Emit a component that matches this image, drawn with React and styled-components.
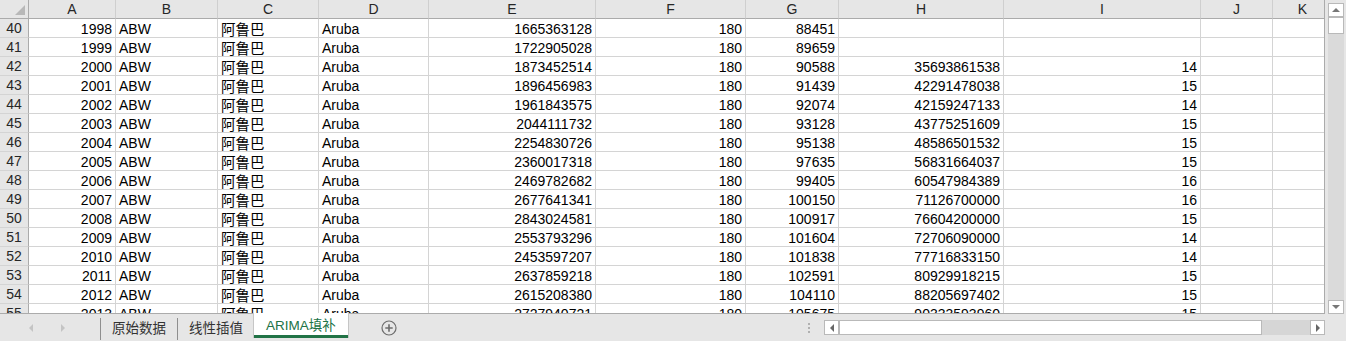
import React from "react";
import styled, { createGlobalStyle } from "styled-components";

const GlobalStyle = createGlobalStyle`
    body {
        margin: 0;
        overflow: hidden;
        background: #e6e6e6;
        font-family: "Liberation Sans", Arial, "Noto Sans CJK SC", sans-serif;
    }
`;

const COLS = [
    { key: "A", w: 87 },
    { key: "B", w: 102 },
    { key: "C", w: 101 },
    { key: "D", w: 110 },
    { key: "E", w: 167 },
    { key: "F", w: 150 },
    { key: "G", w: 93 },
    { key: "H", w: 165 },
    { key: "I", w: 197 },
    { key: "J", w: 72 },
    { key: "K", w: 60 },
];

const ROWS = [
    [40, 1998, 1665363128, 88451, "", ""],
    [41, 1999, 1722905028, 89659, "", ""],
    [42, 2000, 1873452514, 90588, "35693861538", 14],
    [43, 2001, 1896456983, 91439, "42291478038", 15],
    [44, 2002, 1961843575, 92074, "42159247133", 14],
    [45, 2003, 2044111732, 93128, "43775251609", 15],
    [46, 2004, 2254830726, 95138, "48586501532", 15],
    [47, 2005, 2360017318, 97635, "56831664037", 15],
    [48, 2006, 2469782682, 99405, "60547984389", 16],
    [49, 2007, 2677641341, 100150, "71126700000", 16],
    [50, 2008, 2843024581, 100917, "76604200000", 15],
    [51, 2009, 2553793296, 101604, "72706090000", 14],
    [52, 2010, 2453597207, 101838, "77716833150", 14],
    [53, 2011, 2637859218, 102591, "80929918215", 15],
    [54, 2012, 2615208380, 104110, "88205697402", 15],
    [55, 2013, 2727940721, 105675, "90333593960", 15],
];

const S = {
    Window: styled.div`
        width: 1346px;
        height: 341px;
        display: flex;
        flex-direction: column;
        background: #e6e6e6;
        overflow: hidden;
    `,
    Main: styled.div`
        display: flex;
        height: 314px;
    `,
    Sheet: styled.div`
        width: 1325px;
        height: 314px;
        box-sizing: border-box;
        border-right: 1px solid #ababab;
        border-bottom: 1px solid #ababab;
        background: #fff;
        overflow: hidden;
    `,
    Grid: styled.div`
        display: grid;
        grid-template-columns: 29px ${COLS.map(c => c.w + "px").join(" ")};
        grid-auto-rows: 19px;
    `,
    Corner: styled.div`
        position: relative;
        background: #e6e6e6;
        box-sizing: border-box;
        border-right: 1px solid #ababab;
        border-bottom: 1px solid #ababab;

        &::after {
            content: "";
            position: absolute;
            right: 3px;
            bottom: 3px;
            width: 0;
            height: 0;
            border-left: 10px solid transparent;
            border-bottom: 10px solid #b8b8b8;
        }
    `,
    ColHead: styled.div`
        background: #e6e6e6;
        box-sizing: border-box;
        border-right: 1px solid #cfcfcf;
        border-bottom: 1px solid #ababab;
        color: #262626;
        font-size: 14px;
        line-height: 18px;
        text-align: center;
    `,
    RowHead: styled.div`
        background: #e6e6e6;
        box-sizing: border-box;
        border-right: 1px solid #ababab;
        border-bottom: 1px solid #d4d4d4;
        color: #262626;
        font-size: 14px;
        line-height: 19px;
        text-align: center;
    `,
    Cell: styled.div`
        box-sizing: border-box;
        border-right: 1px solid #d4d4d4;
        border-bottom: 1px solid #d4d4d4;
        padding: 0 ${props => props.$right ? "3px" : "2px"} 0 3px;
        text-align: ${props => props.$right ? "right" : "left"};
        color: #000;
        font-family: ${props => props.$cjk ? `"Noto Sans CJK SC", sans-serif` : `"Liberation Sans", Arial, sans-serif`};
        font-size: ${props => props.$cjk ? "14.5px" : "14px"};
        line-height: 20px;
        white-space: nowrap;
        overflow: hidden;
    `,
    VScroll: styled.div`
        width: 21px;
        box-sizing: border-box;
        padding: 3px 2px 0 3px;
        display: flex;
        flex-direction: column;
    `,
    ScrollBtn: styled.div`
        height: ${props => props.$h || 14}px;
        box-sizing: border-box;
        background: #fff;
        border: 1px solid #b9b9b9;
        display: flex;
        align-items: center;
        justify-content: center;
        flex-shrink: 0;
    `,
    Track: styled.div`
        flex: 1;
        background: #dadada;
        display: flex;
        flex-direction: column;
        justify-content: ${props => props.$vertical ? "flex-start" : "stretch"};
    `,
    Thumb: styled.div`
        height: 17px;
        box-sizing: border-box;
        background: #fff;
        border: 1px solid #b9b9b9;
    `,
    TabBar: styled.div`
        flex: 1;
        display: flex;
        align-items: stretch;
    `,
    Nav: styled.div`
        width: 100px;
        display: flex;
        align-items: center;
        padding-left: 27px;
        box-sizing: border-box;
        gap: 24px;
    `,
    Sep: styled.div`
        width: 1px;
        margin-top: 4px;
        margin-bottom: 1px;
        background: #8f8f8f;
    `,
    Tab: styled.div`
        display: flex;
        align-items: center;
        padding: 0 ${props => props.$active ? "12px" : "11px"} ${props => props.$active ? "0" : "1px"};
        margin-top: ${props => props.$active ? "-1px" : "0"};
        margin-bottom: ${props => props.$active ? "3px" : "0"};
        background: ${props => props.$active ? "#fff" : "transparent"};
        color: ${props => props.$active ? "#217346" : "#333"};
        border-bottom: ${props => props.$active ? "3px solid #217346" : "none"};
        box-shadow: ${props => props.$active ? "1px 0 0 #c6c6c6, -1px 0 0 #c6c6c6" : "none"};
        font-family: "Liberation Sans", "Noto Sans CJK SC", sans-serif;
        font-size: 13.5px;
        white-space: nowrap;
    `,
    AddBtn: styled.div`
        margin-left: 33px;
        display: flex;
        align-items: center;
    `,
    Spacer: styled.div`
        flex: 1;
    `,
    Dots: styled.div`
        display: flex;
        flex-direction: column;
        justify-content: center;
        gap: 2px;
        margin-right: 14px;

        & span {
            display: block;
            width: 2px;
            height: 2px;
            background: #b0b0b0;
        }
    `,
    HScroll: styled.div`
        width: 501px;
        height: 15px;
        margin-top: 6px;
        margin-right: 21px;
        display: flex;
    `,
    HTrack: styled.div`
        flex: 1;
        background: #d6d6d6;
        display: flex;
    `,
    HThumb: styled.div`
        width: 423px;
        box-sizing: border-box;
        background: #fff;
        border: 1px solid #b9b9b9;
    `,
};

const Arrow = ({ dir, color = "#777", size = 7 }) => {
    const pts = {
        up: "0,6 8,6 4,2",
        down: "0,2 8,2 4,6",
        left: "6,0 6,8 2,4",
        right: "2,0 2,8 6,4",
    };
    return (
        <svg width={size + 1} height={size + 1} viewBox="0 0 8 8">
            <polygon points={pts[dir]} fill={color} />
        </svg>
    );
};

const PlusCircle = () => (
    <svg width="16" height="16" viewBox="0 0 16 16">
        <circle cx="8" cy="8" r="7" fill="none" stroke="#6d6d6d" strokeWidth="1.2" />
        <path d="M8 4.3v7.4M4.3 8h7.4" stroke="#6d6d6d" strokeWidth="1.6" />
    </svg>
);

export default function App() {
    return (
        <S.Window>
            <GlobalStyle />
            <S.Main>
                <S.Sheet>
                    <S.Grid>
                        <S.Corner />
                        {COLS.map(c => <S.ColHead key={c.key}>{c.key}</S.ColHead>)}
                        {ROWS.map(r => (
                            <React.Fragment key={r[0]}>
                                <S.RowHead>{r[0]}</S.RowHead>
                                <S.Cell $right>{r[1]}</S.Cell>
                                <S.Cell>ABW</S.Cell>
                                <S.Cell $cjk>阿鲁巴</S.Cell>
                                <S.Cell>Aruba</S.Cell>
                                <S.Cell $right>{r[2]}</S.Cell>
                                <S.Cell $right>180</S.Cell>
                                <S.Cell $right>{r[3]}</S.Cell>
                                <S.Cell $right>{r[4]}</S.Cell>
                                <S.Cell $right>{r[5]}</S.Cell>
                                <S.Cell />
                                <S.Cell />
                            </React.Fragment>
                        ))}
                    </S.Grid>
                </S.Sheet>
                <S.VScroll>
                    <S.ScrollBtn $h={14}><Arrow dir="up" /></S.ScrollBtn>
                    <S.Track $vertical>
                        <S.Thumb />
                    </S.Track>
                    <S.ScrollBtn $h={14}><Arrow dir="down" /></S.ScrollBtn>
                </S.VScroll>
            </S.Main>
            <S.TabBar>
                <S.Nav>
                    <Arrow dir="left" color="#c4c4c4" />
                    <Arrow dir="right" color="#c4c4c4" />
                </S.Nav>
                <S.Sep />
                <S.Tab>原始数据</S.Tab>
                <S.Sep />
                <S.Tab>线性插值</S.Tab>
                <S.Tab $active>ARIMA填补</S.Tab>
                <S.AddBtn><PlusCircle /></S.AddBtn>
                <S.Spacer />
                <S.Dots><span /><span /><span /></S.Dots>
                <S.HScroll>
                    <S.ScrollBtn $h={15} style={{ width: 15 }}><Arrow dir="left" color="#666" /></S.ScrollBtn>
                    <S.HTrack>
                        <S.HThumb />
                    </S.HTrack>
                    <S.ScrollBtn $h={15} style={{ width: 15 }}><Arrow dir="right" color="#666" /></S.ScrollBtn>
                </S.HScroll>
            </S.TabBar>
        </S.Window>
    );
}
